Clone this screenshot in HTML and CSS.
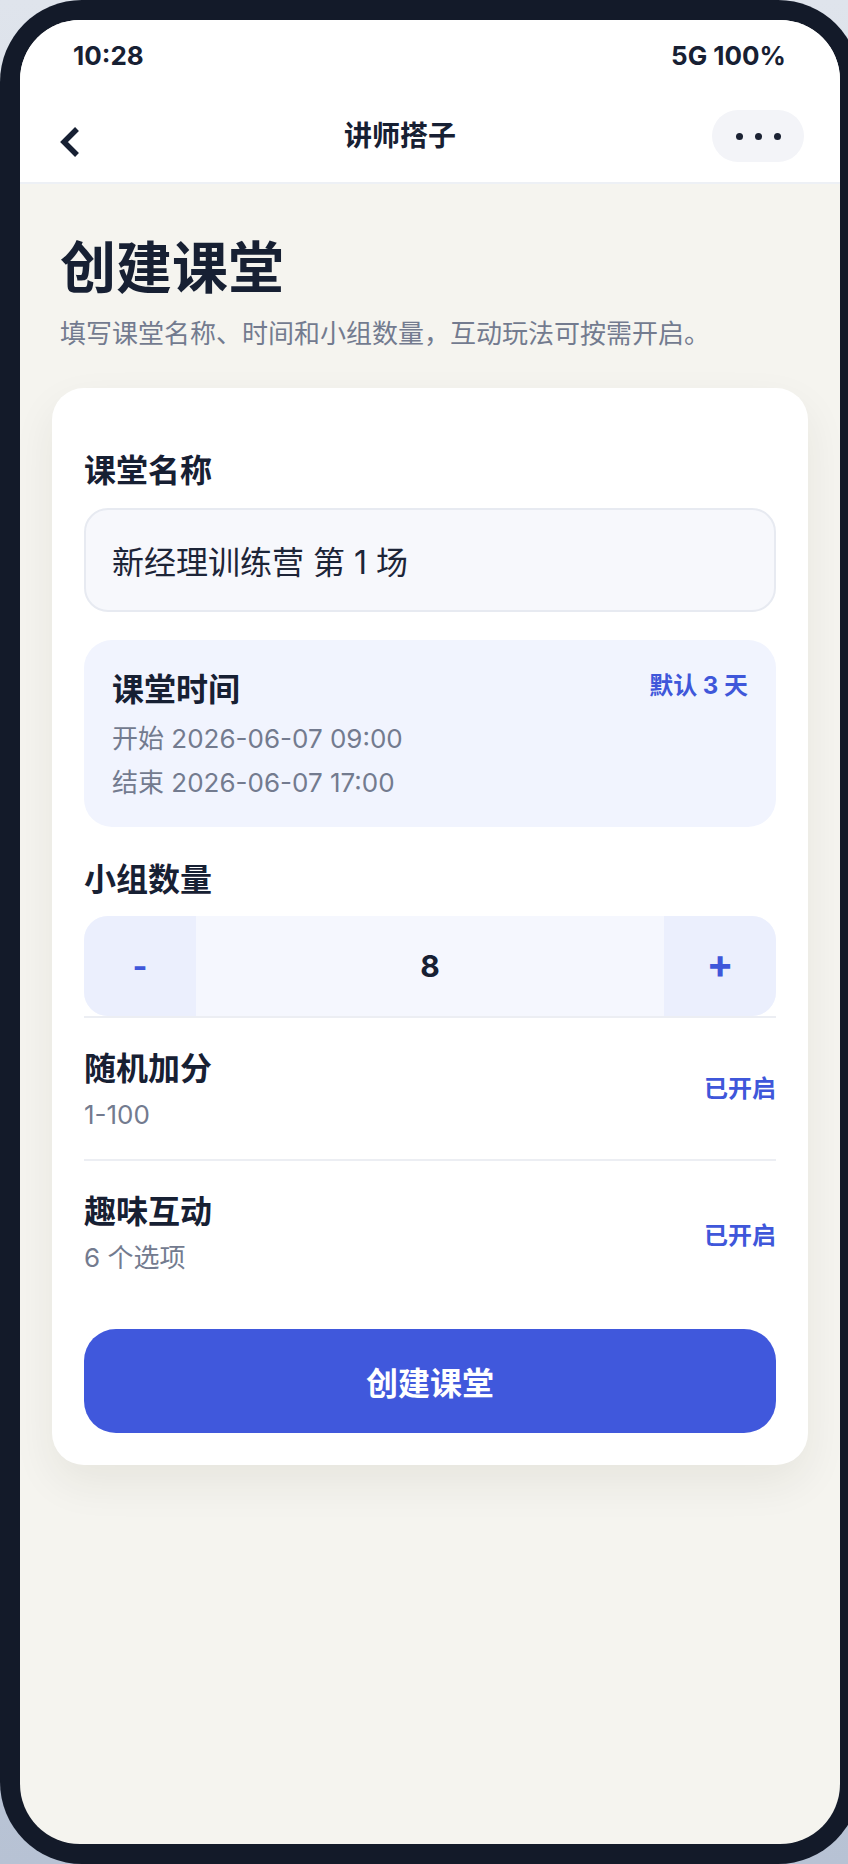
FILE: index.html
```html
<!DOCTYPE html>
<html lang="zh-CN">
<head>
<meta charset="utf-8">
<title>创建课堂</title>
<link rel="stylesheet" href="styles.css">
</head>
<body>
<div class="phone">
  <div class="screen">
    <div class="status">
      <span>10:28</span>
      <span>5G 100%</span>
    </div>
    <div class="nav">
      <div class="back">
        <svg width="22" height="30" viewBox="0 0 22 30"><polyline points="18,2 5,15 18,28" fill="none" stroke="#172033" stroke-width="5.5" stroke-linejoin="miter"/></svg>
      </div>
      <div class="nav-title">讲师搭子</div>
      <div class="more"><i></i><i></i><i></i></div>
    </div>
    <div class="content">
      <div class="intro">
        <h1 class="intro-title">创建课堂</h1>
        <p class="intro-sub">填写课堂名称、时间和小组数量，互动玩法可按需开启。</p>
      </div>
      <div class="card">
        <div class="label">课堂名称</div>
        <div class="input">新经理训练营 第 1 场</div>
        <div class="time">
          <div class="time-head">
            <div class="time-title">课堂时间</div>
            <div class="time-tag">默认 3 天</div>
          </div>
          <div class="time-line">开始 2026-06-07 09:00</div>
          <div class="time-line">结束 2026-06-07 17:00</div>
        </div>
        <div class="label label-group">小组数量</div>
        <div class="stepper">
          <div class="step-btn">-</div>
          <div class="step-val">8</div>
          <div class="step-btn step-plus">+</div>
        </div>
        <div class="toggle-row">
          <div class="toggle-text">
            <div class="toggle-title">随机加分</div>
            <div class="toggle-sub">1-100</div>
          </div>
          <div class="toggle-state">已开启</div>
        </div>
        <div class="toggle-row">
          <div class="toggle-text">
            <div class="toggle-title">趣味互动</div>
            <div class="toggle-sub">6 个选项</div>
          </div>
          <div class="toggle-state toggle-state-low">已开启</div>
        </div>
        <button class="submit">创建课堂</button>
      </div>
    </div>
  </div>
</div>
</body>
</html>
```

FILE: styles.css
```css
* { box-sizing: border-box; }

html, body {
  margin: 0;
  padding: 0;
  width: 848px;
  height: 1864px;
  overflow: hidden;
}

body {
  background: linear-gradient(180deg, #dfe4ec 0%, #c9d1de 60%, #b7c2d4 100%);
  font-family: Inter, "Noto Sans CJK SC", sans-serif;
  color: #172033;
}

.phone {
  width: 860px;
  height: 1864px;
  background: #131a29;
  border-radius: 82px;
  padding: 20px;
}

.screen {
  width: 820px;
  height: 1824px;
  border-radius: 60px;
  overflow: hidden;
  background: #f5f4ef;
  display: flex;
  flex-direction: column;
}

.status {
  height: 70px;
  flex: none;
  background: #fff;
  display: flex;
  align-items: center;
  justify-content: space-between;
  padding: 0 54px 0 53px;
  font-size: 26px;
  font-weight: 700;
  color: #172033;
}

.nav {
  height: 94px;
  flex: none;
  background: #fff;
  border-bottom: 2px solid #edf0f5;
  display: flex;
  align-items: center;
  padding: 0 36px;
}

.back {
  width: 32px;
  display: flex;
  align-items: center;
  padding-left: 3px;
  padding-top: 12px;
}

.back svg { display: block; }

.nav-title {
  flex: 1;
  text-align: center;
  font-size: 28px;
  font-weight: 700;
  line-height: 40px;
  color: #172033;
}

.more {
  width: 92px;
  height: 52px;
  border-radius: 26px;
  background: #f3f4f8;
  display: flex;
  align-items: center;
  justify-content: center;
  gap: 12px;
}

.more i {
  width: 7px;
  height: 7px;
  border-radius: 50%;
  background: #1b2233;
}

.content {
  padding: 0 32px;
}

.intro {
  padding: 50px 8px 0;
}

.intro-title {
  margin: 0;
  font-size: 56px;
  line-height: 68px;
  font-weight: 700;
  color: #172033;
}

.intro-sub {
  margin: 14px 0 0;
  font-size: 26px;
  line-height: 36px;
  color: #737b8f;
}

.card {
  margin-top: 36px;
  background: #fff;
  border-radius: 32px;
  padding: 59px 32px 32px;
  box-shadow: 0 18px 44px rgba(40, 36, 20, 0.07);
}

.label {
  font-size: 32px;
  line-height: 48px;
  font-weight: 700;
  color: #172033;
}

.input {
  margin-top: 13px;
  height: 104px;
  border: 2px solid #e7eaf1;
  border-radius: 24px;
  background: #f7f8fc;
  display: flex;
  align-items: center;
  padding: 0 26px;
  font-size: 32px;
  color: #1d2538;
}

.time {
  margin-top: 28px;
  background: #f1f4fe;
  border-radius: 28px;
  padding: 26px 28px 22px;
}

.time-head {
  display: flex;
  justify-content: space-between;
  align-items: flex-start;
}

.time-title {
  font-size: 32px;
  line-height: 48px;
  font-weight: 700;
  color: #172033;
}

.time-tag {
  font-size: 24px;
  line-height: 40px;
  font-weight: 700;
  color: #3f57da;
}

.time-line {
  font-size: 26px;
  line-height: 44px;
  color: #737b8f;
}

.time-head + .time-line { margin-top: 3px; }

.label-group {
  margin-top: 29px;
}

.stepper {
  margin-top: 12px;
  height: 100px;
  border-radius: 24px;
  overflow: hidden;
  display: grid;
  grid-template-columns: 112px 1fr 112px;
  background: #f5f7fe;
}

.step-btn {
  background: #ebeffd;
  display: flex;
  align-items: center;
  justify-content: center;
  font-size: 32px;
  font-weight: 700;
  color: #3f57da;
}

.step-plus {
  font-size: 40px;
  padding-bottom: 6px;
}

.step-val {
  display: flex;
  align-items: center;
  justify-content: center;
  font-size: 30px;
  font-weight: 700;
  color: #172033;
}

.toggle-row {
  border-top: 2px solid #eceef3;
  padding: 27px 0;
  display: flex;
  align-items: center;
  justify-content: space-between;
}

.toggle-title {
  font-size: 32px;
  line-height: 48px;
  font-weight: 700;
  color: #172033;
}

.toggle-sub {
  margin-top: 5px;
  font-size: 26px;
  line-height: 34px;
  color: #737b8f;
}

.toggle-state {
  font-size: 24px;
  line-height: 34px;
  font-weight: 700;
  color: #3f57da;
}

.toggle-state-low {
  margin-top: 8px;
}

.submit {
  margin-top: 27px;
  width: 100%;
  height: 104px;
  border: none;
  border-radius: 32px;
  background: #4058dc;
  color: #fff;
  font-family: Inter, "Noto Sans CJK SC", sans-serif;
  font-size: 32px;
  font-weight: 700;
  display: block;
}
```
